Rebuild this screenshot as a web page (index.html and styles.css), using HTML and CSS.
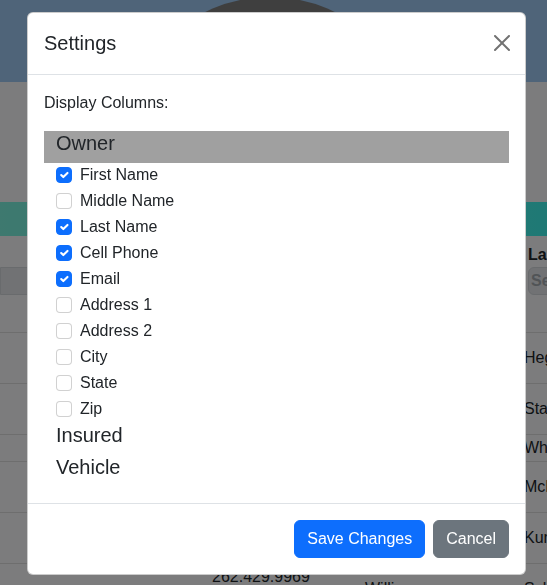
FILE: index.html
```html
<!DOCTYPE html>
<html lang="en">
<head>
<meta charset="utf-8">
<title>Settings</title>
<link rel="stylesheet" href="styles.css">
</head>
<body>
<div class="page">
  <header class="topbar"><div class="avatar"></div></header>
  <div class="spacer"></div>
  <div class="tablebar"></div>
  <table class="grid">
    <colgroup><col class="c0"><col class="c1"><col class="c2"><col class="c3"><col class="c4"></colgroup>
    <thead>
      <tr class="labels"><th>Policy</th><th>Cell Phone</th><th>First Name</th><th>Last Name</th><th>Email</th></tr>
      <tr class="filters">
        <th><input class="filter" placeholder="Search"></th>
        <th><input class="filter" placeholder="Search"></th>
        <th><input class="filter" placeholder="Search"></th>
        <th><input class="filter" placeholder="Search"></th>
        <th><input class="filter" placeholder="Search"></th>
      </tr>
    </thead>
    <tbody>
      <tr><td>10231</td><td>262.311.4820<br>262.311.4821</td><td>Laura</td><td>Hegmann</td><td>laura@example.com</td></tr>
      <tr><td>10232</td><td>262.845.1290<br>262.845.1291</td><td>Mark</td><td>Stanton</td><td>mark@example.com</td></tr>
      <tr><td>10233</td><td>262.504.7733</td><td>Joan</td><td>White</td><td>joan@example.com</td></tr>
      <tr><td>10234</td><td>262.918.6402<br>262.918.6403</td><td>Peter</td><td>McLaughlin</td><td>peter@example.com</td></tr>
      <tr><td>10235</td><td>262.770.2158<br>262.770.2159</td><td>Sara</td><td>Kunze</td><td>sara@example.com</td></tr>
      <tr><td>10236</td><td>262.429.9969<br>262.429.9970</td><td>William</td><td>Schmidt</td><td>will@example.com</td></tr>
    </tbody>
  </table>
</div>

<div class="backdrop">
  <div class="modal" role="dialog" aria-labelledby="settings-title">
    <div class="modal-header">
      <h5 class="modal-title" id="settings-title">Settings</h5>
      <button class="btn-close" type="button" aria-label="Close">
        <svg viewBox="0 0 16 16" width="16" height="16" aria-hidden="true"><path d="M.293.293a1 1 0 011.414 0L8 6.586 14.293.293a1 1 0 111.414 1.414L9.414 8l6.293 6.293a1 1 0 01-1.414 1.414L8 9.414l-6.293 6.293a1 1 0 01-1.414-1.414L6.586 8 .293 1.707a1 1 0 010-1.414z"/></svg>
      </button>
    </div>
    <div class="modal-body">
      <p class="intro">Display Columns:</p>
      <div class="group">
        <div class="group-title is-open">Owner</div>
        <div class="checks">
          <label class="check"><input type="checkbox" checked><span>First Name</span></label>
          <label class="check"><input type="checkbox"><span>Middle Name</span></label>
          <label class="check"><input type="checkbox" checked><span>Last Name</span></label>
          <label class="check"><input type="checkbox" checked><span>Cell Phone</span></label>
          <label class="check"><input type="checkbox" checked><span>Email</span></label>
          <label class="check"><input type="checkbox"><span>Address 1</span></label>
          <label class="check"><input type="checkbox"><span>Address 2</span></label>
          <label class="check"><input type="checkbox"><span>City</span></label>
          <label class="check"><input type="checkbox"><span>State</span></label>
          <label class="check"><input type="checkbox"><span>Zip</span></label>
        </div>
      </div>
      <div class="group"><div class="group-title">Insured</div></div>
      <div class="group"><div class="group-title">Vehicle</div></div>
    </div>
    <div class="modal-footer">
      <button class="btn btn-primary" type="button">Save Changes</button>
      <button class="btn btn-secondary" type="button">Cancel</button>
    </div>
  </div>
</div>
</body>
</html>
```

FILE: styles.css
```css
* { box-sizing: border-box; }

html, body {
  margin: 0;
  height: 100%;
}

body {
  overflow: hidden;
  font-family: "Liberation Sans", Arial, sans-serif;
  font-size: 16px;
  line-height: 24px;
  color: #212529;
  background: #f8f9fa;
}

/* ---------- page behind the dialog ---------- */
.page { width: 900px; }

.topbar {
  width: 100vw;
  height: 82px;
  background: #9ec8f2;
  overflow: hidden;
  display: flex;
  justify-content: center;
}

.avatar {
  flex: none;
  width: 300px;
  height: 300px;
  margin-top: -3px;
  margin-right: 7px;
  border-radius: 50%;
  background: #7e7e7e;
}

.spacer { height: 120px; }

.tablebar {
  width: 100vw;
  height: 34px;
  background: linear-gradient(90deg, #7cf2de, #3ef2ea);
}

.grid {
  table-layout: fixed;
  width: 876px;
  border-collapse: collapse;
}

.c0 { width: 204px; }
.c1 { width: 153px; }
.c2 { width: 159px; }
.c3 { width: 160px; }
.c4 { width: 200px; }

.labels th {
  text-align: left;
  font-weight: 700;
  padding: 7px 12px 0;
  white-space: nowrap;
  overflow: hidden;
}

.labels th:first-child { padding-left: 48px; }

.filters th {
  padding: 0 0 37px 12px;
}

.filters th:first-child { padding-left: 0; }

.filter {
  display: block;
  width: 100%;
  height: 28px;
  margin: 0;
  padding: 0 2px;
  font: inherit;
  font-weight: 700;
  color: #adb5bd;
  background: #e2e5e8;
  border: 1px solid #d3d7db;
  border-radius: 6px;
}

.filters th:first-child .filter { padding-left: 48px; border-radius: 0 6px 6px 0; }

.filter::placeholder { color: #a3a9ae; }

.grid td {
  border-top: 1px solid #dcdcdc;
  padding: 1px 8px;
  vertical-align: middle;
  white-space: nowrap;
  overflow: hidden;
}

.grid td:first-child {
  padding-left: 48px;
  vertical-align: bottom;
}

/* ---------- dialog ---------- */
.backdrop {
  position: fixed;
  inset: 0;
  background: rgba(0, 0, 0, 0.5);
  padding: 12px 21px 0 27px;
}

.modal {
  background: #fff;
  border: 1px solid rgba(0, 0, 0, 0.2);
  border-radius: 6px;
  overflow: hidden;
}

.modal-header {
  display: flex;
  align-items: center;
  padding: 15px 16px 16px;
  border-bottom: 1px solid #dee2e6;
}

.modal-title {
  margin: 0;
  font-size: 20px;
  font-weight: 400;
  line-height: 30px;
}

.btn-close {
  margin: -4px -5px -4px auto;
  padding: 4px;
  border: 0;
  background: transparent;
  line-height: 0;
  cursor: pointer;
}

.btn-close svg {
  display: block;
  fill: #000;
  opacity: 0.55;
}

.modal-body { padding: 16px; }

.intro { margin: 0 0 16px; }

.group-title {
  font-size: 20px;
  line-height: 24px;
  padding: 0 12px 8px;
}

.group-title.is-open { background: #a0a0a0; }

.checks { padding-left: 12px; }

.check {
  display: block;
  min-height: 24px;
  padding-left: 24px;
  margin-bottom: 2px;
}

.check input {
  float: left;
  margin: 4px 0 0 -24px;
  width: 16px;
  height: 16px;
  appearance: none;
  -webkit-appearance: none;
  background: #fff no-repeat center / contain;
  border: 1px solid rgba(0, 0, 0, 0.18);
  border-radius: 4px;
}

.check input:checked {
  background-color: #0d6efd;
  border-color: #0d6efd;
  background-image: url("data:image/svg+xml,%3csvg xmlns='http://www.w3.org/2000/svg' viewBox='0 0 20 20'%3e%3cpath fill='none' stroke='%23fff' stroke-linecap='round' stroke-linejoin='round' stroke-width='3' d='M6 10l3 3l6-6'/%3e%3c/svg%3e");
}

.modal-footer {
  display: flex;
  justify-content: flex-end;
  padding: 12px;
  border-top: 1px solid #dee2e6;
}

.btn {
  margin: 4px;
  padding: 6px 12px;
  font: inherit;
  line-height: 24px;
  color: #fff;
  border: 1px solid transparent;
  border-radius: 6px;
  cursor: pointer;
}

.btn-primary { background: #0d6efd; border-color: #0d6efd; }
.btn-secondary { background: #6c757d; border-color: #6c757d; }
```
